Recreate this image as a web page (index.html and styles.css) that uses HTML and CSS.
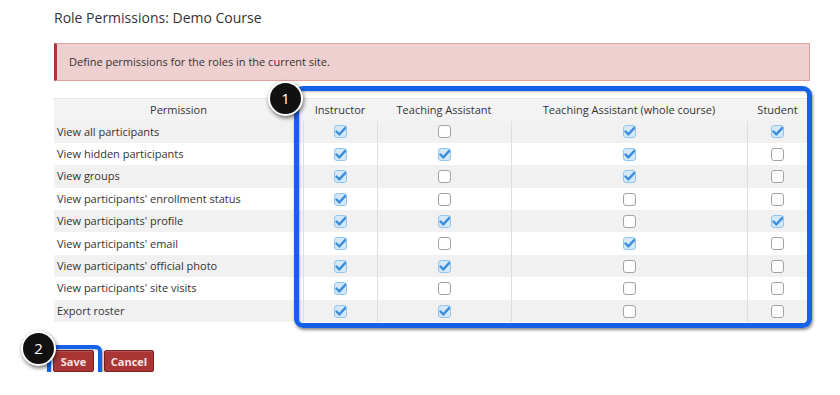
FILE: index.html
```html
<!DOCTYPE html>
<html>
<head>
<meta charset="utf-8">
<link rel="stylesheet" href="styles.css">
</head>
<body>
<div class="page">
  <h1 class="title">Role Permissions: Demo Course</h1>
  <div class="alert">Define permissions for the roles in the current site.</div>
  <div class="table-wrap">
    <table class="perm">
      <colgroup>
        <col class="c-perm"><col class="c-ins"><col class="c-ta"><col class="c-taw"><col class="c-stu">
      </colgroup>
      <thead>
        <tr><th>Permission</th><th>Instructor</th><th>Teaching Assistant</th><th>Teaching Assistant (whole course)</th><th>Student</th></tr>
      </thead>
      <tbody>
        <tr><td class="name">View all participants</td><td><span class="cb on"></span></td><td><span class="cb"></span></td><td><span class="cb on"></span></td><td><span class="cb on"></span></td></tr>
        <tr><td class="name">View hidden participants</td><td><span class="cb on"></span></td><td><span class="cb on"></span></td><td><span class="cb on"></span></td><td><span class="cb"></span></td></tr>
        <tr><td class="name">View groups</td><td><span class="cb on"></span></td><td><span class="cb"></span></td><td><span class="cb on"></span></td><td><span class="cb"></span></td></tr>
        <tr><td class="name">View participants' enrollment status</td><td><span class="cb on"></span></td><td><span class="cb"></span></td><td><span class="cb"></span></td><td><span class="cb"></span></td></tr>
        <tr><td class="name">View participants' profile</td><td><span class="cb on"></span></td><td><span class="cb on"></span></td><td><span class="cb"></span></td><td><span class="cb on"></span></td></tr>
        <tr><td class="name">View participants' email</td><td><span class="cb on"></span></td><td><span class="cb"></span></td><td><span class="cb on"></span></td><td><span class="cb"></span></td></tr>
        <tr><td class="name">View participants' official photo</td><td><span class="cb on"></span></td><td><span class="cb on"></span></td><td><span class="cb"></span></td><td><span class="cb"></span></td></tr>
        <tr><td class="name">View participants' site visits</td><td><span class="cb on"></span></td><td><span class="cb"></span></td><td><span class="cb"></span></td><td><span class="cb"></span></td></tr>
        <tr><td class="name">Export roster</td><td><span class="cb on"></span></td><td><span class="cb on"></span></td><td><span class="cb"></span></td><td><span class="cb"></span></td></tr>
      </tbody>
    </table>
    <div class="highlight hl-table"></div>
    <div class="badge badge-1">1</div>
  </div>
  <div class="actions">
    <button class="btn">Save</button>
    <button class="btn">Cancel</button>
    <div class="highlight hl-save"></div>
    <div class="badge badge-2">2</div>
  </div>
</div>
</body>
</html>
```

FILE: styles.css
```css
* { box-sizing: border-box; }
html, body { margin: 0; padding: 0; background: #fff; }
body { font-family: "Open Sans", "DejaVu Sans", sans-serif; color: #333; }
.page { padding: 8px 30px 0 54px; width: 840px; }
.title { margin: 0; font-size: 14px; font-weight: normal; line-height: 20px; color: #333; }
.alert {
  margin-top: 15px;
  width: 756px;
  height: 38px;
  background: #efd0d1;
  border: 1px solid #e3a3a5;
  border-left: 3px solid #b1353a;
  padding: 0 0 0 12px;
  font-size: 11px;
  line-height: 36px;
  color: #333;
}
.table-wrap { position: relative; margin-top: 17px; width: 756px; }
.perm { border-collapse: collapse; width: 754px; table-layout: fixed; font-size: 11px; }
.c-perm { width: 249px; }
.c-ins { width: 74px; }
.c-ta { width: 134px; }
.c-taw { width: 236px; }
.c-stu { width: 61px; }
.perm th { height: 22px; font-weight: normal; text-align: center; background: #f3f3f3; padding: 0; border-top: 1px solid #e6e6e6; }
.perm td { height: 22.4px; padding: 0; text-align: center; vertical-align: middle; border-left: 1px solid #dedede; line-height: 12px; }
.perm td.name { text-align: left; padding-left: 3px; border-left: none; }
.perm tbody tr:nth-child(odd) td { background: #f1f1f1; }
.cb {
  display: inline-block;
  width: 13px; height: 13px;
  border: 1px solid #a3a3a3;
  border-radius: 3px;
  background: #fff;
  vertical-align: middle;
  position: relative;
}
.cb.on {
  border-color: #93c5ec;
  background: #d3e8f8 url("data:image/svg+xml;utf8,<svg xmlns='http://www.w3.org/2000/svg' viewBox='0 0 13 13'><path d='M2.5 6.5 L5.3 9.4 L11.8 2.4' fill='none' stroke='%233d8fdd' stroke-width='2.4' stroke-linecap='round' stroke-linejoin='round'/></svg>") no-repeat -1px -1px / 13px 13px;
}
.highlight {
  position: absolute;
  border: 5px solid #1662e6;
  border-radius: 9px;
  box-shadow: 1px 2px 3px rgba(0,0,0,0.45), inset 1px 1px 2px rgba(0,0,0,0.25);
  pointer-events: none;
}
.hl-table { left: 240px; top: -12px; width: 518px; height: 242px; }
.badge {
  position: absolute;
  width: 35px; height: 35px;
  border-radius: 50%;
  background: #111;
  border: 2px solid #fff;
  color: #fff;
  font-size: 15px;
  line-height: 31px;
  text-align: center;
  box-shadow: 1px 2px 4px rgba(0,0,0,0.55);
}
.badge-1 { left: 214px; top: -17px; }
.actions { position: relative; margin-top: 28px; display: flex; gap: 10px; margin-left: -1px; }
.btn {
  height: 22px;
  padding: 0 8px;
  background: #a93535;
  border: 1px solid #7e2020;
  border-radius: 2px;
  color: #f6e3e3;
  font-family: "Open Sans", "DejaVu Sans", sans-serif;
  font-size: 11px;
  font-weight: bold;
  box-shadow: inset 0 1px 0 rgba(255,255,255,0.15);
}
.btn:first-child { width: 41px; padding: 0; }
.btn:nth-child(2) { width: 50px; padding: 0; }
.hl-save { left: -6px; top: -5px; width: 55px; height: 33px; border-width: 4px; border-radius: 6px; }
.badge-2 { left: -32px; top: -19px; }
```
